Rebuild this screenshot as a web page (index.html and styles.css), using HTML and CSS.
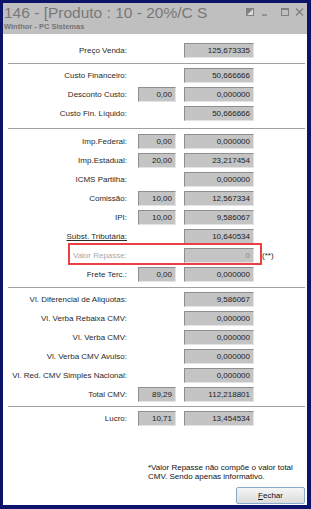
FILE: index.html
```html
<!DOCTYPE html>
<html lang="pt">
<head>
    <meta charset="UTF-8">
    <title>146 - [Produto : 10 - 20%/C S</title>
    <link rel="stylesheet" href="styles.css">
</head>
<body>
    <div class="window">
        <div class="titlebar">
            <div class="title-text">
                <div class="title">146 - [Produto : 10 - 20%/C S</div>
                <div class="subtitle">Winthor - PC Sistemas</div>
            </div>
            <svg class="title-buttons" width="60" height="8" viewBox="0 0 60 8">
                <rect x="1.5" y="0.5" width="7" height="7" fill="#d8d8d8" stroke="#808080"/>
                <polygon points="1,0 9,0 1,8" fill="#808080"/>
                <line x1="17" y1="7" x2="22" y2="7" stroke="#808080" stroke-width="1.4"/>
                <rect x="36.5" y="0.5" width="7" height="7" fill="none" stroke="#808080"/>
                <line x1="36" y1="1.5" x2="44" y2="1.5" stroke="#808080"/>
                <line x1="51" y1="0.5" x2="58" y2="7.5" stroke="#808080" stroke-width="1.3"/>
                <line x1="58" y1="0.5" x2="51" y2="7.5" stroke="#808080" stroke-width="1.3"/>
            </svg>
        </div>

        <div class="content">
            <div class="form">
                <div class="row"><span class="label">Preço Venda:</span><span class="slot"></span><span class="field wide">125,673335</span></div>
                <div class="sep"></div>

                <div class="row"><span class="label">Custo Financeiro:</span><span class="slot"></span><span class="field wide">50,666666</span></div>
                <div class="row"><span class="label">Desconto Custo:</span><span class="field small">0,00</span><span class="field wide">0,000000</span></div>
                <div class="row"><span class="label">Custo Fin. Líquido:</span><span class="slot"></span><span class="field wide">50,666666</span></div>
                <div class="sep sep-wide"></div>

                <div class="row"><span class="label">Imp.Federal:</span><span class="field small">0,00</span><span class="field wide">0,000000</span></div>
                <div class="row"><span class="label">Imp.Estadual:</span><span class="field small">20,00</span><span class="field wide">23,217454</span></div>
                <div class="row"><span class="label">ICMS Partilha:</span><span class="slot"></span><span class="field wide">0,000000</span></div>
                <div class="row"><span class="label">Comissão:</span><span class="field small">10,00</span><span class="field wide">12,567334</span></div>
                <div class="row"><span class="label">IPI:</span><span class="field small">10,00</span><span class="field wide">9,586067</span></div>
                <div class="row"><span class="label link">Subst. Tributária:</span><span class="slot"></span><span class="field wide">10,640534</span></div>
                <div class="row row-marked"><span class="label muted">Valor Repasse:</span><span class="slot"></span><span class="field wide muted">0</span><span class="mark">(**)</span></div>
                <div class="row"><span class="label">Frete Terc.:</span><span class="field small">0,00</span><span class="field wide">0,000000</span></div>
                <div class="sep"></div>

                <div class="row"><span class="label">Vl. Diferencial de Aliquotas:</span><span class="slot"></span><span class="field wide">9,586067</span></div>
                <div class="row"><span class="label">Vl. Verba Rebaixa CMV:</span><span class="slot"></span><span class="field wide">0,000000</span></div>
                <div class="row"><span class="label">Vl. Verba CMV:</span><span class="slot"></span><span class="field wide">0,000000</span></div>
                <div class="row"><span class="label">Vl. Verba CMV Avulso:</span><span class="slot"></span><span class="field wide">0,000000</span></div>
                <div class="row"><span class="label">Vl. Red. CMV Simples Nacional:</span><span class="slot"></span><span class="field wide">0,000000</span></div>
                <div class="row"><span class="label">Total CMV:</span><span class="field small">89,29</span><span class="field wide">112,218801</span></div>
                <div class="sep sep-tight"></div>

                <div class="row"><span class="label">Lucro:</span><span class="field small">10,71</span><span class="field wide">13,454534</span></div>
            </div>

            <div class="footer">
                <p class="note">*Valor Repasse não compõe o valor total<br>CMV. Sendo apenas informativo.</p>
                <button class="btn"><u>F</u>echar</button>
            </div>
        </div>
    </div>
</body>
</html>
```

FILE: styles.css
```css
* { margin: 0; padding: 0; box-sizing: border-box; }
body {
    background: #0b1468;
    font-family: "Liberation Sans", Arial, sans-serif;
}
.window {
    width: 311px;
    height: 509px;
    border: 3px solid #0b1468;
    border-right-width: 4px;
    border-bottom-width: 4px;
    background: #fff;
    display: flex;
    flex-direction: column;
}
.titlebar {
    height: 31px;
    background: #bfbfbf;
    display: flex;
    justify-content: space-between;
    padding: 1px 2px 0 1px;
}
.title {
    font-size: 15.5px;
    line-height: 18px;
    color: #787878;
    white-space: nowrap;
}
.subtitle {
    font-size: 7.5px;
    line-height: 9px;
    font-weight: bold;
    color: #747474;
}
.title-buttons {
    margin-top: 4px;
}
.content {
    flex: 1;
    display: flex;
    flex-direction: column;
    padding: 7px 0 0 5px;
}
.row {
    display: flex;
    align-items: center;
    height: 19px;
    position: relative;
}
.label {
    width: 119px;
    margin-right: 11px;
    text-align: right;
    font-size: 8px;
    color: #2a2a2a;
    white-space: nowrap;
}
.label.link {
    text-decoration: underline;
}
.muted {
    color: #a8a8a8;
}
.slot {
    width: 38px;
    margin-right: 8px;
}
.field {
    height: 15px;
    border: 1px solid;
    border-color: #8e8e8e #e4e4e4 #e4e4e4 #8e8e8e;
    background: #c4c4c4;
    font-size: 8px;
    line-height: 13px;
    text-align: right;
    padding-right: 3px;
    color: #222;
}
.field.small {
    width: 38px;
    margin-right: 8px;
}
.field.wide {
    width: 70px;
}
.field.muted {
    color: #8a8a8a;
}
.mark {
    font-size: 8px;
    margin-left: 8px;
    color: #222;
}
.row-marked::after {
    content: "";
    position: absolute;
    left: 60px;
    top: -3px;
    width: 190px;
    height: 18px;
    border: 2px solid #ea4044;
}
.sep {
    width: 297px;
    height: 1px;
    background: #a0a0a0;
    margin: 3px 0 2px;
}
.sep-wide {
    margin: 5px 0 3px;
}
.sep-tight {
    margin: 2px 0 2px;
}
.footer {
    margin-top: auto;
    display: flex;
    flex-direction: column;
    padding-left: 140px;
}
.note {
    font-size: 8px;
    line-height: 9px;
    color: #111;
    margin-bottom: 6px;
}
.btn {
    align-self: flex-end;
    width: 69px;
    height: 17px;
    margin: 0 2px 1px 0;
    border: 1px solid #8aaacb;
    border-radius: 2px;
    background: linear-gradient(#f5f5f5, #dcdcdc);
    font-family: "Liberation Sans", Arial, sans-serif;
    font-size: 8px;
    color: #111;
}
```
